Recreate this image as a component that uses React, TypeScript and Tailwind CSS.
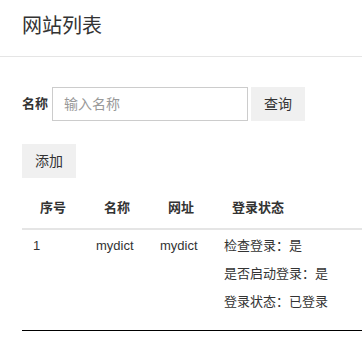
import React from "react";

const font = { fontFamily: '"Liberation Sans", "Noto Sans CJK SC", sans-serif' };

export default function App() {
  return (
    <div className="w-[362px] h-[362px] overflow-hidden bg-white text-[#333]" style={font}>
      <div className="pl-[22px] pt-[12px] pb-[16px] text-[20px] leading-[28px]">网站列表</div>
      <div className="h-px bg-[#e5e5e5]" />
      <div className="pl-[22px]">
        <div className="mt-[30px] flex items-center">
          <span className="text-[13px] font-bold mr-[4px]">名称</span>
          <input
            className="w-[196px] h-[34px] border border-[#ccc] px-[11px] text-[14px] outline-none placeholder:text-[#999]"
            placeholder="输入名称"
            style={font}
          />
          <button className="ml-[3px] w-[54px] h-[34px] bg-[#f0f0f0] text-[14px]">查询</button>
        </div>
        <button className="mt-[23px] w-[54px] h-[34px] bg-[#f0f0f0] text-[14px] block">添加</button>
        <table className="mt-[8px] w-[400px] border-collapse text-[13px] table-fixed">
          <colgroup>
            <col className="w-[62px]" />
            <col className="w-[66px]" />
            <col className="w-[62px]" />
            <col className="w-[92px]" />
            <col />
          </colgroup>
          <thead>
            <tr className="border-b-2 border-[#e5e5e5]">
              <th className="pt-[12px] pb-[10px] leading-[20px] font-bold text-center">序号</th>
              <th className="pt-[12px] pb-[10px] leading-[20px] font-bold text-center">名称</th>
              <th className="pt-[12px] pb-[10px] leading-[20px] font-bold text-center">网址</th>
              <th className="pt-[12px] pb-[10px] leading-[20px] font-bold text-center">登录状态</th>
              <th />
            </tr>
          </thead>
          <tbody>
            <tr className="border-b border-black align-top">
              <td className="pt-[2px] pb-[14px] pl-[11px] leading-[28px]">1</td>
              <td className="pt-[2px] pb-[14px] pl-[12px] leading-[28px]">mydict</td>
              <td className="pt-[2px] pb-[14px] pl-[10px] leading-[28px]">mydict</td>
              <td className="pt-[2px] pb-[14px] pl-[12px] leading-[28px] whitespace-nowrap">
                <div>检查登录：是</div>
                <div>是否启动登录：是</div>
                <div>登录状态：已登录</div>
              </td>
              <td />
            </tr>
          </tbody>
        </table>
      </div>
    </div>
  );
}
